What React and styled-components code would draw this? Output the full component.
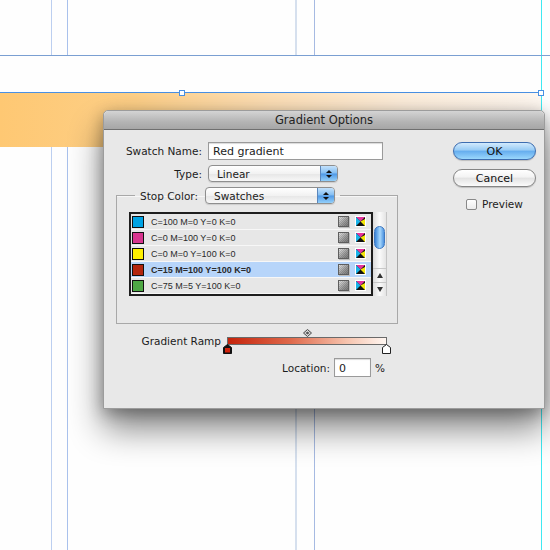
import styled, { createGlobalStyle } from 'styled-components'

const GlobalStyle = createGlobalStyle`
  html, body { margin:0; padding:0; background:#fff; }
  body { font-family:"DejaVu Sans", "Liberation Sans", sans-serif; overflow:hidden; }
`

const Canvas = styled.div`
  position:relative;
  width:550px;
  height:550px;
  background:#fefefe;
  overflow:hidden;
`
const Guide = styled.div`
  position:absolute;
  left:${p => p.x}px;
  top:${p => p.top}px;
  width:${p => p.w || 1}px;
  height:${p => p.h}px;
  background:${p => p.color};
`
const HGuide = styled.div`
  position:absolute;
  left:0;
  top:55px;
  width:550px;
  height:1px;
  background:#7a9fd2;
`
const Frame = styled.div`
  position:absolute;
  left:0;
  top:92px;
  width:541px;
  height:54px;
  border-top:1px solid #4a90e2;
  background:linear-gradient(to right, #fec873 0%, #fdcf87 25%, #fddfb6 50%, #fdeedc 75%, #fef7f0 100%);
`
const Handle = styled.div`
  position:absolute;
  top:-3px;
  left:${p => p.x - 3}px;
  width:4px;
  height:4px;
  background:#fff;
  border:1px solid #4a90e2;
`

const Dialog = styled.div`
  position:absolute;
  left:103px;
  top:110px;
  width:442px;
  height:299px;
  box-sizing:border-box;
  background:#e8e8e8;
  border:1px solid #9c9c9c;
  border-radius:5px 5px 0 0;
  box-shadow:0 20px 34px rgba(0,0,0,0.48), 0 4px 16px rgba(0,0,0,0.3);
  display:flex;
  flex-direction:column;
  color:#1c1c1c;
`
const TitleBar = styled.div`
  flex:none;
  height:18px;
  display:flex;
  align-items:center;
  justify-content:center;
  background:linear-gradient(#d4d4d4, #b4b4b4 60%, #a6a6a6);
  border-bottom:1px solid #6f6f6f;
  border-radius:5px 5px 0 0;
  font-size:11.5px;
  color:#222;
`
const Body = styled.div`
  display:flex;
  padding:12px 8px 0 12px;
`
const LeftCol = styled.div`
  width:282px;
  display:flex;
  flex-direction:column;
`
const RightCol = styled.div`
  margin-left:auto;
  width:83px;
  display:flex;
  flex-direction:column;
`
const FieldRow = styled.div`
  display:flex;
  align-items:center;
  gap:6px;
  margin-top:${p => p.mt || 0}px;
`
const Label = styled.div`
  width:${p => p.w || 86}px;
  text-align:right;
  font-size:10.5px;
  white-space:nowrap;
`
const TextInput = styled.div`
  width:${p => p.w}px;
  height:${p => p.h || 18}px;
  box-sizing:border-box;
  background:#fff;
  border:1px solid #9a9a9a;
  box-shadow:inset 0 1px 1px rgba(0,0,0,0.15);
  font-size:11px;
  padding:1px 4px 0;
  display:flex;
  align-items:center;
`
const Select = styled.div`
  width:${p => p.w}px;
  height:17px;
  box-sizing:border-box;
  display:flex;
  align-items:center;
  border:1px solid #8e8e8e;
  border-radius:4px;
  overflow:hidden;
  background:linear-gradient(#ffffff, #f2f2f2 50%, #e6e6e6 51%, #f7f7f7);
  box-shadow:0 1px 1px rgba(0,0,0,0.12);
  font-size:10.5px;
  padding-left:8px;
`
const Stepper = styled.div`
  margin-left:auto;
  width:16px;
  height:100%;
  border-left:1px solid #5b86bb;
  background:linear-gradient(#c4e2fc, #82bdf2 48%, #4e98e6 52%, #94d0fa);
  display:flex;
  flex-direction:column;
  align-items:center;
  justify-content:center;
  gap:2px;
`
const Tri = styled.div`
  width:0;
  height:0;
  border-left:3px solid transparent;
  border-right:3px solid transparent;
  ${p => p.down ? 'border-top:3px solid #111;' : 'border-bottom:3px solid #111;'}
`

const Group = styled.fieldset`
  margin:5px 0 0;
  padding:0 10px 27px 12px;
  border:1px solid #a8a8a8;
  box-shadow:inset 0 1px 0 #f6f6f6;
  min-width:0;
`
const Legend = styled.legend`
  margin-left:6px;
  padding:0 5px;
  display:flex;
  align-items:center;
  gap:7px;
  font-size:10.5px;
`
const ListWrap = styled.div`
  display:flex;
  margin-top:8px;
`
const ListBox = styled.div`
  width:245px;
  height:84px;
  box-sizing:border-box;
  border:2px solid #1e1e1e;
  background:#e6e6e6;
  display:flex;
  flex-direction:column;
`
const Row = styled.div`
  height:16px;
  box-sizing:border-box;
  border-bottom:1px solid #f7f7f7;
  display:flex;
  align-items:center;
  padding:0 5px 0 1px;
  background:${p => p.selected ? '#b7d5fa' : '#e7e7e7'};
  font-family:"Liberation Sans", Arial, sans-serif;
  font-size:9px;
  font-weight:${p => p.selected ? 700 : 400};
  color:#2a2a2a;
`
const Swatch = styled.div`
  width:12px;
  height:12px;
  box-sizing:border-box;
  border:1px solid #111;
  background:${p => p.color};
  margin-right:7px;
`
const ProcessIcon = styled.div`
  margin-left:auto;
  width:9px;
  height:9px;
  border:1px solid #5e5e5e;
  background:
    repeating-conic-gradient(rgba(0,0,0,0.14) 0 25%, transparent 0 50%) 0 0/2px 2px,
    linear-gradient(135deg, #e4e4e4, #9a9a9a 60%, #7a7a7a);
  box-shadow:1px 1px 0 #bdbdbd;
  margin-right:6px;
`
const Scrollbar = styled.div`
  width:13px;
  height:84px;
  display:flex;
  flex-direction:column;
  background:linear-gradient(to right, #dcdcdc, #fbfbfb 50%, #e4e4e4);
  border-right:1px solid #c4c4c4;
`
const Track = styled.div`
  flex:1;
  display:flex;
  justify-content:center;
`
const Thumb = styled.div`
  margin-top:14px;
  width:11px;
  height:23px;
  border-radius:6px;
  box-sizing:border-box;
  border:1px solid #3f78c0;
  background:linear-gradient(to right, #3b84d8, #8ec8f8 45%, #a9d8fc 55%, #4b92e0);
`
const ArrowBtn = styled.div`
  height:13px;
  display:flex;
  align-items:center;
  justify-content:center;
  border-top:1px solid #c8c8c8;
`
const Arrow = styled.div`
  width:0;
  height:0;
  border-left:3px solid transparent;
  border-right:3px solid transparent;
  ${p => p.down ? 'border-top:5px solid #333;' : 'border-bottom:5px solid #333;'}
`

const RampRow = styled.div`
  display:flex;
  align-items:center;
  gap:6px;
  margin-top:11px;
`
const Ramp = styled.div`
  position:relative;
  width:160px;
  height:8px;
  box-sizing:border-box;
  border:1px solid #6a6a6a;
  background:linear-gradient(to right, #c5230b, #df6a4c 40%, #f6c3ad 75%, #fff7f2);
`
const Marker = styled.div`
  position:absolute;
  left:${p => p.x}px;
  top:${p => p.y}px;
  line-height:0;
`
const LocationRow = styled.div`
  display:flex;
  align-items:center;
  justify-content:flex-end;
  margin-top:11px;
  padding-right:13px;
  font-size:10.5px;
  gap:4px;
`
const Button = styled.button`
  width:83px;
  height:18px;
  padding:0;
  border-radius:9px;
  font-family:"DejaVu Sans", sans-serif;
  font-size:11px;
  color:#111;
  margin-top:${p => p.mt || 0}px;
  border:1px solid ${p => p.primary ? '#3d6db0' : '#858585'};
  background:${p => p.primary
    ? 'linear-gradient(#d2eafd, #97cbf5 45%, #64acee 50%, #9ad7fc)'
    : 'linear-gradient(#ffffff, #f3f3f3 45%, #e2e2e2 50%, #fbfbfb)'};
  box-shadow:0 1px 1px rgba(0,0,0,0.18);
`
const CheckRow = styled.div`
  display:flex;
  align-items:center;
  gap:5px;
  margin-top:11px;
  padding-left:13px;
  font-size:10.5px;
`
const Checkbox = styled.div`
  width:11px;
  height:11px;
  box-sizing:border-box;
  border:1px solid #888;
  border-radius:2px;
  background:linear-gradient(#fff, #ececec);
`

const CmykIcon = () => (
  <svg width="11" height="11" viewBox="0 0 11 11">
    <rect x="0.5" y="0.5" width="10" height="10" fill="#111" stroke="#fff" />
    <polygon points="1,1 10,1 5.5,5.5" fill="#e6339b" />
    <polygon points="1,1 1,10 5.5,5.5" fill="#19b3e8" />
    <polygon points="10,3 10,10 5.5,5.5" fill="#f5e60a" />
  </svg>
)

const swatches = [
  { color: '#00a3e4', name: 'C=100 M=0 Y=0 K=0' },
  { color: '#d8358f', name: 'C=0 M=100 Y=0 K=0' },
  { color: '#fff000', name: 'C=0 M=0 Y=100 K=0' },
  { color: '#b3260f', name: 'C=15 M=100 Y=100 K=0', selected: true },
  { color: '#4ea845', name: 'C=75 M=5 Y=100 K=0' },
]

const App = () => {
  return (
    <Canvas>
      <GlobalStyle />
      <Guide x={51} top={0} h={55} color="#bccff0" />
      <Guide x={67} top={0} h={55} color="#a9c1ec" />
      <Guide x={295} top={0} h={55} w={2} color="#d6e0ee" />
      <Guide x={314} top={0} h={55} color="#a6bae2" />
      <Guide x={51} top={146} h={404} color="#bccff0" />
      <Guide x={67} top={146} h={404} color="#a9c1ec" />
      <Guide x={295} top={146} h={404} w={2} color="#d6e0ee" />
      <Guide x={314} top={146} h={404} color="#a6bae2" />
      <Guide x={541} top={0} h={550} color="#3fe9f2" />
      <HGuide />
      <Frame>
        <Handle x={182} />
        <Handle x={541} />
      </Frame>

      <Dialog>
        <TitleBar>Gradient Options</TitleBar>
        <Body>
          <LeftCol>
            <FieldRow>
              <Label>Swatch Name:</Label>
              <TextInput w={175}>Red gradient</TextInput>
            </FieldRow>
            <FieldRow mt={5}>
              <Label>Type:</Label>
              <Select w={130}>
                Linear
                <Stepper><Tri /><Tri down /></Stepper>
              </Select>
            </FieldRow>
            <Group>
              <Legend>
                Stop Color:
                <Select w={130}>
                  Swatches
                  <Stepper><Tri /><Tri down /></Stepper>
                </Select>
              </Legend>
              <ListWrap>
                <ListBox>
                  {swatches.map(s => (
                    <Row key={s.name} selected={s.selected}>
                      <Swatch color={s.color} />
                      {s.name}
                      <ProcessIcon />
                      <CmykIcon />
                    </Row>
                  ))}
                </ListBox>
                <Scrollbar>
                  <Track><Thumb /></Track>
                  <ArrowBtn><Arrow /></ArrowBtn>
                  <ArrowBtn><Arrow down /></ArrowBtn>
                </Scrollbar>
              </ListWrap>
            </Group>
            <RampRow>
              <Label w={105}>Gradient Ramp</Label>
              <Ramp>
                <Marker x={75} y={-9}>
                  <svg width="9" height="8" viewBox="0 0 9 8">
                    <polygon points="4.5,0.5 8.5,4 4.5,7.5 0.5,4" fill="#ddd" stroke="#444" />
                    <polygon points="4.5,2.5 6.5,4 4.5,5.5 2.5,4" fill="#555" />
                  </svg>
                </Marker>
                <Marker x={-5} y={6}>
                  <svg width="9" height="10" viewBox="0 0 9 10">
                    <polygon points="4.5,0.5 8.5,3.5 8.5,9.5 0.5,9.5 0.5,3.5" fill="#111" stroke="#111" />
                    <rect x="2" y="4" width="5" height="4.5" fill="#d2230c" />
                  </svg>
                </Marker>
                <Marker x={154} y={6}>
                  <svg width="9" height="10" viewBox="0 0 9 10">
                    <polygon points="4.5,0.5 8.5,3.5 8.5,9.5 0.5,9.5 0.5,3.5" fill="#fff" stroke="#222" />
                  </svg>
                </Marker>
              </Ramp>
            </RampRow>
            <LocationRow>
              Location:
              <TextInput w={37} h={19}>0</TextInput>
              %
            </LocationRow>
          </LeftCol>
          <RightCol>
            <Button primary>OK</Button>
            <Button mt={9}>Cancel</Button>
            <CheckRow>
              <Checkbox />
              Preview
            </CheckRow>
          </RightCol>
        </Body>
      </Dialog>
    </Canvas>
  )
}

export default App
